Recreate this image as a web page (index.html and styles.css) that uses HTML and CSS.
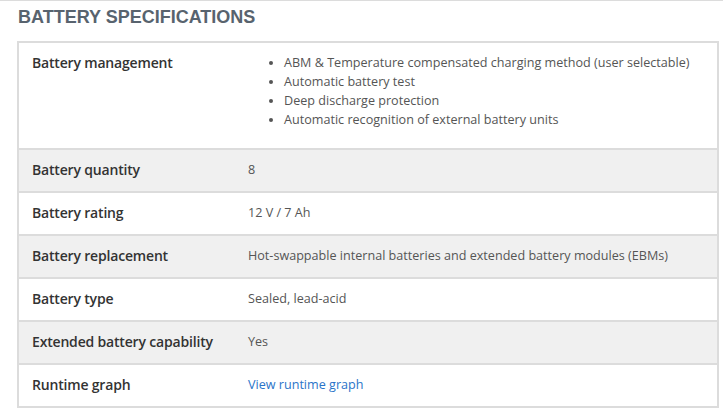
FILE: index.html
```html
<!DOCTYPE html>
<html lang="en">
<head>
<meta charset="utf-8">
<title>Battery specifications</title>
<link rel="stylesheet" href="styles.css">
</head>
<body>
<div class="page">
  <h2 class="title">BATTERY SPECIFICATIONS</h2>
  <table class="specs">
    <tbody>
      <tr class="tall">
        <th>Battery management</th>
        <td>
          <ul class="bullets">
            <li>ABM &amp; Temperature compensated charging method (user selectable)</li>
            <li>Automatic battery test</li>
            <li>Deep discharge protection</li>
            <li>Automatic recognition of external battery units</li>
          </ul>
        </td>
      </tr>
      <tr class="alt">
        <th>Battery quantity</th>
        <td>8</td>
      </tr>
      <tr>
        <th>Battery rating</th>
        <td>12 V / 7 Ah</td>
      </tr>
      <tr class="alt">
        <th>Battery replacement</th>
        <td>Hot-swappable internal batteries and extended battery modules (EBMs)</td>
      </tr>
      <tr>
        <th>Battery type</th>
        <td>Sealed, lead-acid</td>
      </tr>
      <tr class="alt">
        <th>Extended battery capability</th>
        <td>Yes</td>
      </tr>
      <tr>
        <th>Runtime graph</th>
        <td><a class="link" href="#">View runtime graph</a></td>
      </tr>
    </tbody>
  </table>
</div>
</body>
</html>
```
FILE: styles.css
```css
html, body {
  margin: 0;
  padding: 0;
  background: #ffffff;
}

body {
  border-top: 1px solid #dcdcdc;
  font-family: "Open Sans", "Liberation Sans", sans-serif;
}

.page {
  padding: 0 4px 0 17px;
}

.title {
  margin: 0;
  padding: 5px 0 0 1px;
  height: 40px;
  box-sizing: border-box;
  font-family: "Liberation Sans", Arial, sans-serif;
  font-weight: bold;
  font-size: 18px;
  line-height: 22px;
  color: #58636e;
}

.specs {
  width: 702px;
  border-collapse: collapse;
  border: 2px solid #dcdcdc;
}

.specs tr {
  background: #ffffff;
  border-top: 2px solid #dcdcdc;
}

.specs tr.alt {
  background: #f0f0f0;
}

.specs th,
.specs td {
  padding: 10px 14px 11px 14px;
  vertical-align: top;
  text-align: left;
  line-height: 20px;
}

.specs th {
  width: 188px;
  padding-left: 13px;
  font-weight: 600;
  font-size: 14px;
  letter-spacing: -0.18px;
  color: #333333;
}

.specs td {
  font-size: 12.6px;
  color: #555555;
}

.specs tr.tall td,
.specs tr.tall th {
  padding-bottom: 19px;
}

.bullets {
  margin: 0;
  padding: 0 0 0 36px;
  list-style: disc;
}

.bullets li {
  line-height: 19px;
}

.link {
  color: #2a74c9;
  text-decoration: none;
}
```
